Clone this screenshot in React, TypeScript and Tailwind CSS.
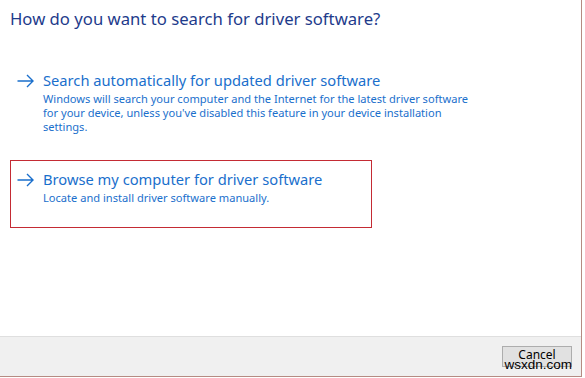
interface DriverOption {
  title: string;
  description: string;
  selected?: boolean;
}

const options: DriverOption[] = [
  {
    title: 'Search automatically for updated driver software',
    description:
      "Windows will search your computer and the Internet for the latest driver software for your device, unless you've disabled this feature in your device installation settings."
  },
  {
    title: 'Browse my computer for driver software',
    description: 'Locate and install driver software manually.',
    selected: true
  }
];

function LinkArrow() {
  return (
    <svg className="mt-[4px] shrink-0" width="17" height="14" viewBox="0 0 17 14" fill="none">
      <path d="M0.5 7H16M10 1L16 7L10 13" stroke="#1a6fcc" strokeWidth="1.4" />
    </svg>
  );
}

function OptionLink({ option }: { option: DriverOption }) {
  return (
    <div
      className={`ml-[10px] flex w-[362px] items-start border pb-[22px] pl-[6px] pr-[8px] pt-[8px] ${option.selected ? 'border-[#c42b34]' : 'border-transparent'}`}
    >
      <LinkArrow />
      <div className="ml-[9px] flex flex-col">
        <span className="whitespace-nowrap text-[14.7px] leading-[20px] text-[#1a6fcc]">{option.title}</span>
        <span className="mt-[2px] w-[432px] text-[11.1px] leading-[14px] text-[#1a6fcc]">{option.description}</span>
      </div>
    </div>
  );
}

export default function App() {
  return (
    <div className="h-[378px] w-[585px] bg-white" style={{ fontFamily: '"Noto Sans", "Open Sans", sans-serif' }}>
      <div className="flex h-[377px] w-[582px] flex-col border-b border-r border-[#b58b82]">
        <div className="flex-1">
          <h1 className="pl-[10px] pt-[9px] text-[16.7px] leading-[20px] text-[#1e3b8b]">
            How do you want to search for driver software?
          </h1>
          <div className="mt-[32px] flex flex-col gap-[3px]">
            {options.map((option) => (
              <OptionLink key={option.title} option={option} />
            ))}
          </div>
        </div>
        <div className="relative flex h-[40px] items-start justify-end border-t border-[#dfdfdf] bg-[#f0f0f0] pr-[9px] pt-[9px]">
          <button
            className="h-[21px] w-[70px] border border-[#adadad] bg-[#e1e1e1] pb-[3px] text-[12px] leading-[14px] text-black"
            type="button"
          >
            Cancel
          </button>
          <span
            className="absolute right-[9px] top-[20px] text-[13.5px] leading-[15px] text-black"
            style={{ fontFamily: '"Liberation Sans", Arial, sans-serif' }}
          >
            wsxdn.com
          </span>
        </div>
      </div>
    </div>
  );
}
